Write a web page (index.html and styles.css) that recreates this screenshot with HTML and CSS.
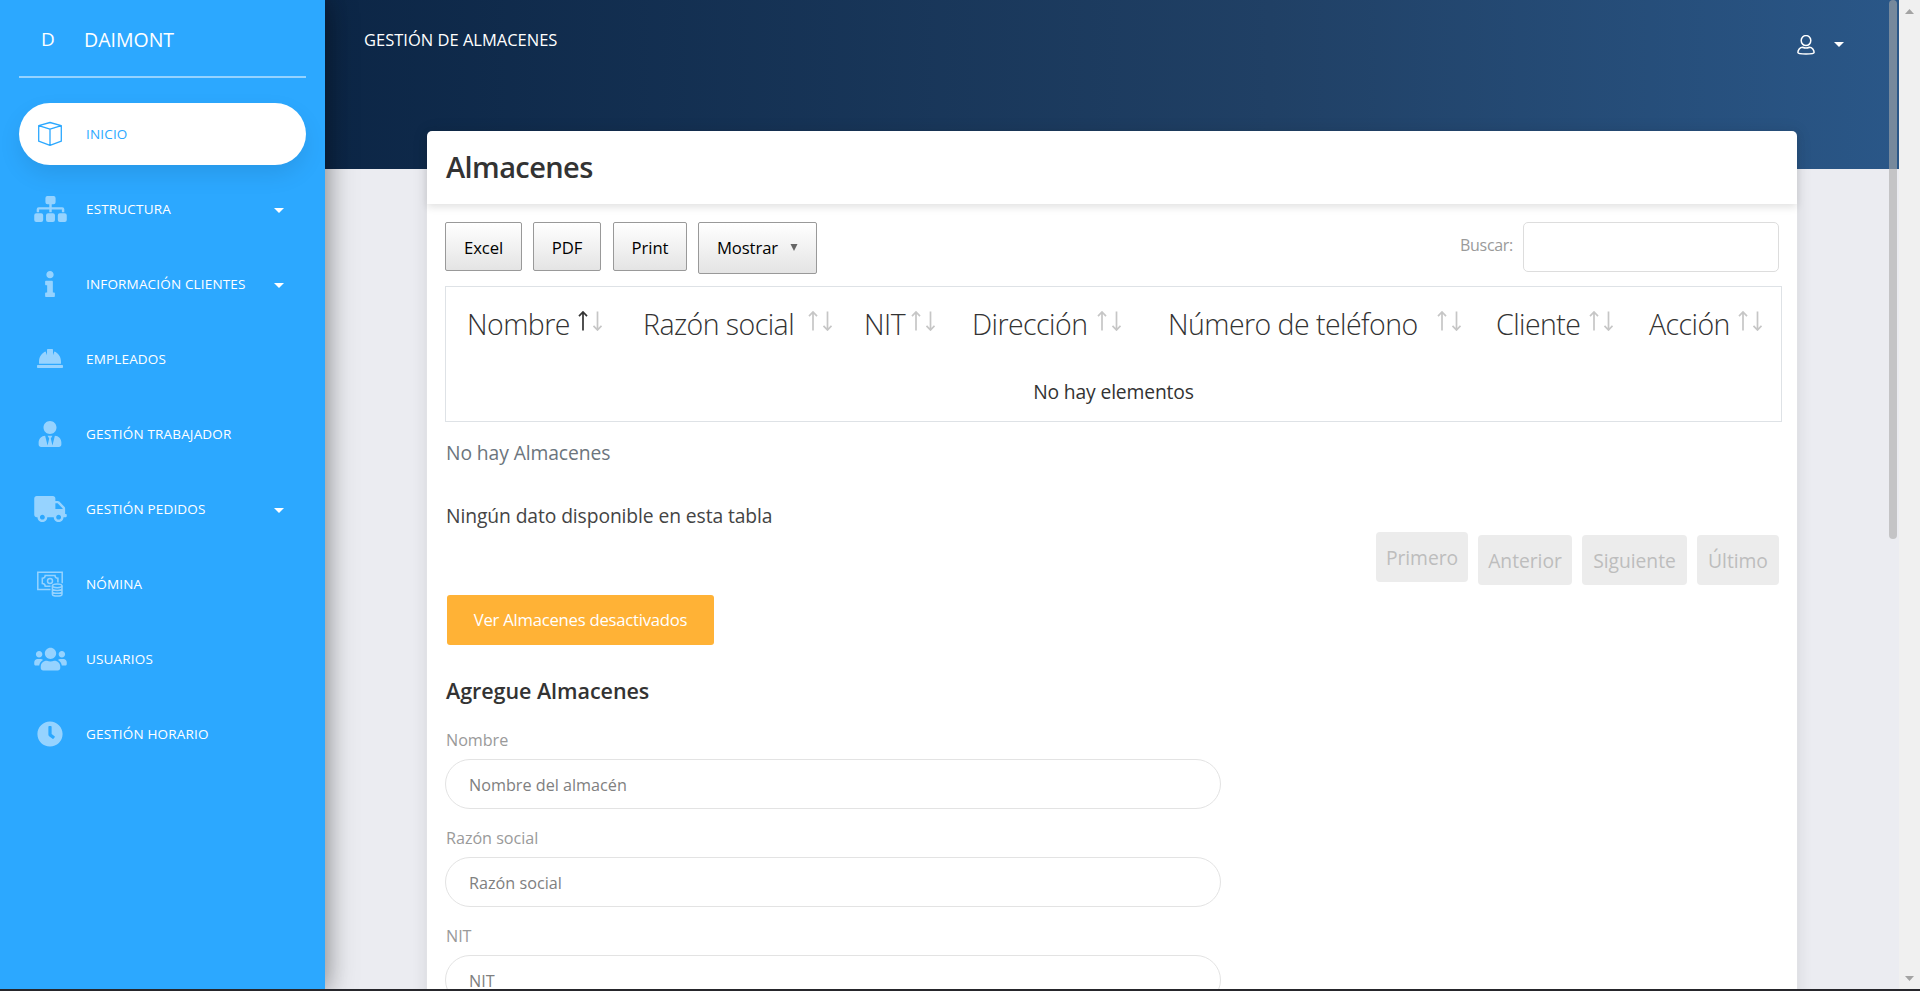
FILE: index.html
```
<!DOCTYPE html>
<html lang="es">
<head>
<meta charset="utf-8">
<title>Gestión de Almacenes</title>
<link rel="stylesheet" href="styles.css">
</head>
<body>
<div class="app">
  <aside class="sidebar">
    <div class="logo"><span class="logo-mini">D</span><span class="logo-name">DAIMONT</span></div>
    <nav class="menu">
      <a class="item active"><svg class="icon" viewBox="0 0 26 26" fill="none" stroke="currentColor" stroke-width="1.3" stroke-linejoin="round"><path d="M1.7 4.600 13 1.500l11.300 3.100v15.600L13 24.300 1.700 20.200zM1.700 4.600 13 8.200l11.300-3.600M13 8.200v16"/></svg><span>INICIO</span></a>
      <a class="item"><svg class="icon wide" viewBox="0 0 640 512"><path d="M260 0h120a40 40 0 0 1 40 40v84a40 40 0 0 1-40 40h-36v56h208a40 40 0 0 1 40 40v60h-48v-52H344v52h-48v-52H96v52H48v-60a40 40 0 0 1 40-40h208v-56h-36a40 40 0 0 1-40-40V40a40 40 0 0 1 40-40zM40 340h96a40 40 0 0 1 40 40v92a40 40 0 0 1-40 40H40a40 40 0 0 1-40-40v-92a40 40 0 0 1 40-40zM272 340h96a40 40 0 0 1 40 40v92a40 40 0 0 1-40 40h-96a40 40 0 0 1-40-40v-92a40 40 0 0 1 40-40zM504 340h96a40 40 0 0 1 40 40v92a40 40 0 0 1-40 40h-96a40 40 0 0 1-40-40v-92a40 40 0 0 1 40-40z"/></svg><span>ESTRUCTURA</span><i class="caret"></i></a>
      <a class="item"><svg class="icon" viewBox="0 0 192 512"><path d="M20 424.229h20V279.771H20c-11.046 0-20-8.954-20-20V212c0-11.046 8.954-20 20-20h112c11.046 0 20 8.954 20 20v212.229h20c11.046 0 20 8.954 20 20V492c0 11.046-8.954 20-20 20H20c-11.046 0-20-8.954-20-20v-47.771c0-11.046 8.954-20 20-20zM96 0C56.235 0 24 32.235 24 72s32.235 72 72 72 72-32.235 72-72S135.764 0 96 0z"/></svg><span>INFORMACIÓN CLIENTES</span><i class="caret"></i></a>
      <a class="item"><svg class="icon" viewBox="0 0 26 26"><path d="M2 17.700v-2C2 10.500 5 7 8.600 5.600L10 9.200V3.800a.8.8 0 0 1 .8-.8h4.400a.8.8 0 0 1 .8.8v5.400l1.400-3.600C21 7 24 10.500 24 15.700v2zM.8 19h24.400a.8.800 0 0 1 .8.800V21.200a.8.800 0 0 1-.8.800H.8a.8.800 0 0 1-.8-.8v-1.400a.8.800 0 0 1 .8-.8z"/></svg><span>EMPLEADOS</span></a>
      <a class="item"><svg class="icon" viewBox="0 0 448 512"><path d="M224 256c70.700 0 128-57.300 128-128S294.700 0 224 0 96 57.300 96 128s57.300 128 128 128zm95.800 32.600L272 480l-32-136 32-56h-96l32 56-32 136-47.800-191.400C56.900 292 0 350.300 0 422.400V464c0 26.500 21.500 48 48 48h352c26.500 0 48-21.500 48-48v-41.600c0-72.100-56.900-130.400-128.200-133.800z"/></svg><span>GESTIÓN TRABAJADOR</span></a>
      <a class="item"><svg class="icon wide" viewBox="0 0 640 512"><path d="M624 352h-16V243.900c0-12.700-5.100-24.900-14.100-33.900L494 110.100c-9-9-21.200-14.100-33.900-14.100H416V48c0-26.500-21.500-48-48-48H48C21.500 0 0 21.500 0 48v320c0 26.500 21.500 48 48 48h16c0 53 43 96 96 96s96-43 96-96h128c0 53 43 96 96 96s96-43 96-96h48c8.800 0 16-7.200 16-16v-32c0-8.800-7.200-16-16-16zM160 464c-26.500 0-48-21.500-48-48s21.500-48 48-48 48 21.500 48 48-21.500 48-48 48zm320 0c-26.500 0-48-21.500-48-48s21.500-48 48-48 48 21.500 48 48-21.500 48-48 48zm80-208H416V144h44.100l99.900 99.900V256z"/></svg><span>GESTIÓN PEDIDOS</span><i class="caret"></i></a>
      <a class="item"><svg class="icon" viewBox="0 0 26 26" fill="none" stroke="currentColor" stroke-width="1.5"><path d="M13.500 18.500H.8V1.200h24.400v11M13.500 15.200H8.200c0-1.600-1-2.400-2.900-2.600V7.200c1.900-.1 2.900-1 2.900-2.700h9.800c0 1.700 1 2.600 2.900 2.700v4.200"/><circle cx="13" cy="10" r="2.500"/><ellipse cx="20.200" cy="14.800" rx="4.800" ry="1.900"/><path d="M15.400 14.800v8.400c0 2.500 9.600 2.500 9.600 0v-8.400M15.400 17.600c0 2.500 9.600 2.500 9.600 0M15.400 20.400c0 2.500 9.600 2.500 9.600 0"/></svg><span>NÓMINA</span></a>
      <a class="item"><svg class="icon wide" viewBox="0 0 640 512"><path d="M96 224c35.300 0 64-28.700 64-64s-28.700-64-64-64-64 28.700-64 64 28.700 64 64 64zm448 0c35.300 0 64-28.700 64-64s-28.700-64-64-64-64 28.700-64 64 28.700 64 64 64zm32 32h-64c-17.600 0-33.500 7.100-45.100 18.600 40.300 22.100 68.900 62 75.100 109.400h66c17.700 0 32-14.300 32-32v-32c0-35.300-28.700-64-64-64zm-256 0c61.900 0 112-50.100 112-112S381.900 32 320 32 208 82.100 208 144s50.100 112 112 112zm76.800 32h-8.300c-20.800 10-43.900 16-68.500 16s-47.600-6-68.500-16h-8.300C179.600 288 128 339.600 128 403.200V432c0 26.500 21.500 48 48 48h288c26.500 0 48-21.500 48-48v-28.800c0-63.600-51.600-115.200-115.200-115.200zm-223.700-13.400C161.500 263.100 145.600 256 128 256H64c-35.300 0-64 28.700-64 64v32c0 17.700 14.300 32 32 32h65.900c6.300-47.400 34.900-87.300 75.200-109.400z"/></svg><span>USUARIOS</span></a>
      <a class="item"><svg class="icon" viewBox="0 0 512 512"><path d="M256,8C119,8,8,119,8,256S119,504,256,504,504,393,504,256,393,8,256,8Zm92.490,313h0l-20,25a16,16,0,0,1-22.490,2.500h0l-67-49.720a40,40,0,0,1-15-31.230V112a16,16,0,0,1,16-16h32a16,16,0,0,1,16,16V256l58,42.500A16,16,0,0,1,348.490,321Z"/></svg><span>GESTIÓN HORARIO</span></a>
    </nav>
  </aside>
  <main class="main">
    <header class="topbar">
      <span class="page-name">GESTIÓN DE ALMACENES</span>
      <div class="user">
        <svg class="user-icon" viewBox="0 0 18 20" fill="none" stroke="currentColor" stroke-width="1.500"><ellipse cx="9" cy="5.600" rx="4.800" ry="5"/><path d="M5.600 12.200c2.200 1 4.600 1 6.800 0 2.800 0 4.700 2.900 4.700 5.400 0 2-16.200 2-16.200 0 0-2.500 1.900-5.400 4.700-5.400z"/></svg>
        <i class="caret small"></i>
      </div>
    </header>
    <section class="card">
      <div class="card-head"><h4 class="card-title">Almacenes</h4></div>
      <div class="card-body">
        <div class="tools">
          <button class="btn excel">Excel</button>
          <button class="btn pdf">PDF</button>
          <button class="btn print">Print</button>
          <button class="btn show">Mostrar<svg class="tri" viewBox="0 0 8 8"><path d="M0 0h8L4 8z"/></svg></button>
          <label class="search"><span>Buscar:</span><input type="text"></label>
        </div>
        <div class="table">
          <div class="thead">
            <div class="th col-name"><span>Nombre</span><svg class="sort" viewBox="0 0 24 20"><path class="on" d="M5 19.500V1M1 5.200 5 1l4 4.200"/><path d="M19.500.5V19M15.500 14.800l4 4.200 4-4.200"/></svg></div>
            <div class="th col-legal"><span>Razón social</span><svg class="sort" viewBox="0 0 24 20"><path d="M5 19.500V1M1 5.200 5 1l4 4.200M19.500.5V19M15.500 14.800l4 4.200 4-4.200"/></svg></div>
            <div class="th col-nit"><span>NIT</span><svg class="sort" viewBox="0 0 24 20"><path d="M5 19.500V1M1 5.200 5 1l4 4.200M19.500.5V19M15.500 14.800l4 4.200 4-4.200"/></svg></div>
            <div class="th col-address"><span>Dirección</span><svg class="sort" viewBox="0 0 24 20"><path d="M5 19.500V1M1 5.200 5 1l4 4.200M19.500.5V19M15.500 14.800l4 4.200 4-4.200"/></svg></div>
            <div class="th col-phone"><span>Número de teléfono</span><svg class="sort" viewBox="0 0 24 20"><path d="M5 19.500V1M1 5.200 5 1l4 4.200M19.500.5V19M15.500 14.800l4 4.200 4-4.200"/></svg></div>
            <div class="th col-client"><span>Cliente</span><svg class="sort" viewBox="0 0 24 20"><path d="M5 19.500V1M1 5.200 5 1l4 4.200M19.500.5V19M15.500 14.800l4 4.200 4-4.200"/></svg></div>
            <div class="th col-action"><span>Acción</span><svg class="sort" viewBox="0 0 24 20"><path d="M5 19.500V1M1 5.200 5 1l4 4.200M19.500.5V19M15.500 14.800l4 4.200 4-4.200"/></svg></div>
          </div>
          <div class="empty">No hay elementos</div>
        </div>
        <p class="note muted">No hay Almacenes</p>
        <p class="note info">Ningún dato disponible en esta tabla</p>
        <div class="pager"><a class="page first">Primero</a><a class="page prev">Anterior</a><a class="page next">Siguiente</a><a class="page last">Último</a></div>
        <button class="disabled-link">Ver Almacenes desactivados</button>
        <h5 class="form-title">Agregue Almacenes</h5>
        <form class="form">
          <div class="field"><label for="nombre">Nombre</label><input id="nombre" class="input" type="text" placeholder="Nombre del almacén"></div>
          <div class="field"><label for="razon">Razón social</label><input id="razon" class="input" type="text" placeholder="Razón social"></div>
          <div class="field"><label for="nit">NIT</label><input id="nit" class="input" type="text" placeholder="NIT"></div>
        </form>
      </div>
    </section>
    <div class="thumb"></div>
  </main>
  <div class="scrollbar"><svg viewBox="0 0 9 5"><path d="M4.500 0 9 5H0z"/></svg><svg viewBox="0 0 9 5"><path d="M0 0h9L4.500 5z"/></svg></div>
</div>
</body>
</html>
```

FILE: styles.css
```
* { box-sizing: border-box; }
body { margin: 0; background: #ebecf1; color: #333; font-family: "Open Sans", "Noto Sans", sans-serif; overflow: hidden; }
span { white-space: nowrap; }
.app { display: flex; height: 991px; border-bottom: 2px solid #26262b; overflow: hidden; }

/* Sidebar */
.sidebar { width: 325px; flex: none; padding: 0 19px; background: #2ca8ff; color: #fff; box-shadow: 0 2px 22px 0 rgba(0,0,0,.2), 0 2px 30px 0 rgba(0,0,0,.35); position: relative; z-index: 2; }
.logo { display: flex; align-items: center; height: 78px; padding: 2px 0 0 22px; border-bottom: 2px solid #95d3ff; font-size: 19.500px; }
.logo-mini { width: 43px; font-size: 19px; }
.menu { display: flex; flex-direction: column; gap: 13px; margin-top: 25px; }
.item { display: flex; align-items: center; height: 62px; border-radius: 31px; font-size: 13.500px; letter-spacing: .17px; }
.item span { margin: -1px 0 0 -1px; }
.active { background: #fff; color: #2ca8ff; box-shadow: 0 10px 25px -2px rgba(0,0,0,.1); }
.icon { width: 26px; height: 26px; margin: 0 24px 0 18px; fill: currentColor; opacity: .5; flex: none; }
.icon[fill="none"] { fill: none; }
.active .icon { opacity: 1; }
.wide { width: 33px; margin: 0 20px 0 15px; }
.caret { border: 5px solid transparent; border-top-color: #fff; border-bottom: 0; margin: 2px 22px 0 auto; }

/* Top band */
.main { flex: 1; min-width: 0; position: relative; }
.topbar { display: flex; justify-content: space-between; height: 169px; padding: 0 55px 0 39px; background: linear-gradient(to right, #0c2646 0, #204065 60%, #2a5788 100%); color: #fff; font-size: 16.500px; line-height: 80px; }
.user { display: flex; align-items: flex-start; gap: 19px; padding-top: 35px; }
.user-icon { width: 18px; height: 20px; }
.small { margin: 7px 0 0; }

/* Card */
.card { width: 1370px; height: 900px; margin: -38px 0 0 102px; background: #fff; border-radius: 5px; box-shadow: 0 1px 15px 1px rgba(39,39,39,.1); position: relative; }
.card-head { height: 73px; padding-left: 19px; box-shadow: 0 3px 8px rgba(0,0,0,.12); }
.card-title { margin: 0; font-size: 29px; line-height: 72px; font-weight: 600; letter-spacing: -.6px; }
.card-body { padding: 18px 15px 0 18px; }
.tools { display: flex; align-items: flex-start; height: 64px; padding-right: 3px; }
.btn { height: 49px; margin-right: 11px; padding: 2px 0 0; border: 1px solid #999; border-radius: 2px; background: linear-gradient(#fff, #e4e4e4); color: #000; font: 16.700px "Open Sans", sans-serif; letter-spacing: -.1px; }
.excel { width: 77px; }
.pdf { width: 68px; margin-right: 12px; }
.print { width: 74px; }
.show { width: 119px; height: 52px; padding: 0 0 2px; display: flex; align-items: center; justify-content: center; gap: 12px; }
.tri { width: 8px; height: 7px; fill: #666; }
.search { display: flex; margin-left: auto; gap: 10px; color: #9a9a9a; font-size: 16px; line-height: 46px; letter-spacing: -.3px; }
.search input { width: 256px; height: 50px; border: 1px solid #ddd; border-radius: 5px; }

/* Table */
.table { width: 1337px; border: 1px solid #dee2e6; }
.thead { display: flex; height: 72px; font-size: 28.500px; font-weight: 300; line-height: 74px; letter-spacing: -.55px; padding-left: 21px; }
.th { display: flex; justify-content: space-between; flex: none; }
.sort { width: 24px; height: 20px; margin-top: 24px; fill: none; stroke: #c6c6c6; stroke-width: 1.700; flex: none; }
.sort .on { stroke: #333; }
.col-name { width: 135px; margin-right: 41px; }
.col-legal { width: 189px; margin-right: 32px; }
.col-nit { width: 71px; margin-right: 37px; }
.col-address { width: 149px; margin-right: 47px; }
.col-phone { width: 293px; margin-right: 35px; }
.col-client { width: 117px; margin-right: 36px; }
.col-action { width: 113px; }
.empty { height: 62px; text-align: center; font-size: 19.300px; line-height: 65px; letter-spacing: -.15px; }
.note { margin: 0; padding-left: 1px; font-size: 19.300px; line-height: 62px; letter-spacing: -.1px; }
.muted { color: #6c757d; }
.info { color: #444; line-height: 64px; }
.pager { display: flex; justify-content: flex-end; height: 50px; margin-top: -16px; padding-right: 3px; gap: 10px; }
.page { height: 50px; margin-top: 3px; border-radius: 4px; background: #ececec; color: #bdbdbd; text-align: center; font-size: 19.300px; line-height: 51px; letter-spacing: -.05px; }
.first { width: 92px; margin-top: 0; }
.prev { width: 94px; }
.next { width: 105px; }
.last { width: 82px; }
.disabled-link { display: block; width: 267px; height: 50px; margin: 13px 0 0 2px; padding: 0 0 2px; border: 0; border-radius: 3px; background: #ffb236; color: #fff; font: 16.700px "Open Sans", sans-serif; letter-spacing: -.25px; }
.form-title { margin: 31px 0 0 1px; font-size: 21.500px; line-height: 30px; font-weight: 600; letter-spacing: -.05px; }

/* Form */
.form { padding-top: 19px; font-size: 16.200px; }
.field { height: 98px; }
.field label { display: block; height: 34px; padding-left: 1px; line-height: 31px; color: #9a9a9a; letter-spacing: -.05px; }
.input { display: block; width: 776px; height: 50px; padding: 1px 23px 0; border: 1px solid #e3e3e3; border-radius: 25px; background: #fff; font: 16.200px "Open Sans", sans-serif; }
.input::placeholder { color: #808080; opacity: 1; }

/* Scrollbars */
.thumb { position: absolute; top: 0; right: 2px; width: 8px; height: 539px; border-radius: 4px; background: rgba(170,170,170,.6); }
.scrollbar { width: 21px; flex: none; background: #f0f0f0; display: flex; flex-direction: column; justify-content: space-between; align-items: center; padding: 9px 0 8px; fill: #a3a3a3; }
.scrollbar svg { width: 9px; height: 5px; }
```
